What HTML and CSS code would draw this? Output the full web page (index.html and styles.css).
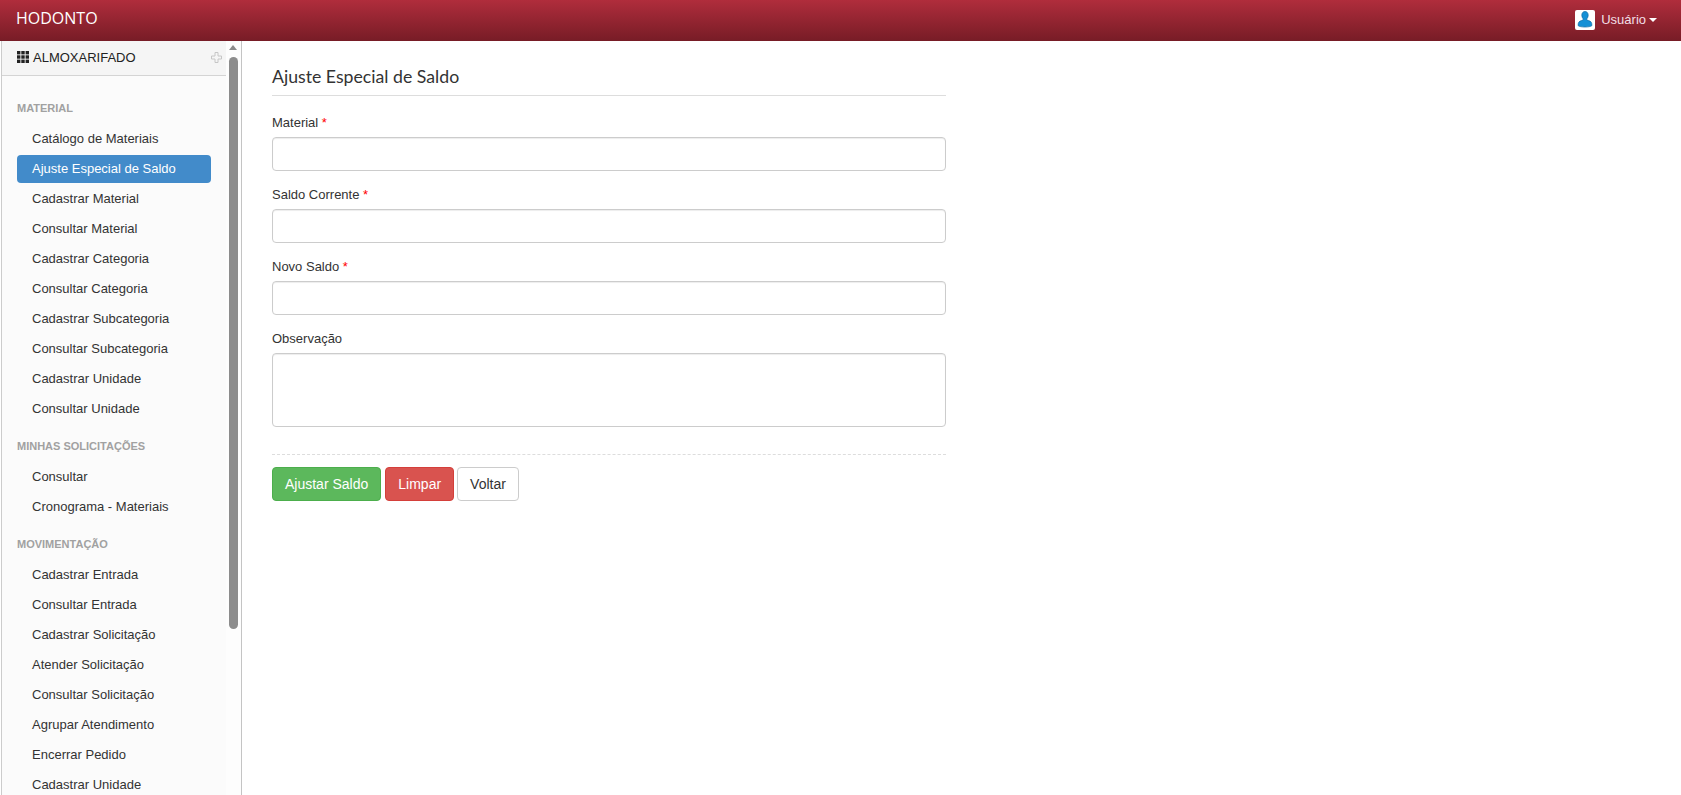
FILE: index.html
```html
<!DOCTYPE html>
<html lang="pt-BR">
<head>
<meta charset="utf-8">
<title>HODONTO</title>
<link rel="stylesheet" href="styles.css">
</head>
<body>
<header class="topbar">
  <span class="brand">HODONTO</span>
  <div class="user">
    <span class="avatar">
      <svg width="20" height="20" viewBox="0 0 20 20"><rect width="20" height="20" rx="2" fill="#fff"/><path d="M10 1.500c1.900 0 3.200 1.500 3.200 3.700 0 1.500-.6 2.800-1.400 3.600v1c0 .5 3.200.9 4.200 2.100.7.8.9 2.200.9 3.700-1 1-4 1.400-6.900 1.400s-5.900-.4-6.900-1.400c0-1.500.2-2.900.9-3.700 1-1.200 4.200-1.600 4.200-2.100v-1c-.8-.8-1.400-2.100-1.400-3.600 0-2.200 1.300-3.700 3.200-3.700z" fill="#1490d6" stroke="#0b6aa5" stroke-width=".7"/></svg>
    </span>
    <span class="user-name">Usuário</span>
    <span class="caret"></span>
  </div>
</header>
<div class="layout">
  <aside class="sidebar">
    <div class="side-main">
      <div class="side-head">
        <svg class="grid-icon" width="12" height="12" viewBox="0 0 12 12" fill="#222"><rect width="3.400" height="3.400"/><rect x="4.300" width="3.400" height="3.400"/><rect x="8.600" width="3.400" height="3.400"/><rect y="4.300" width="3.400" height="3.400"/><rect x="4.300" y="4.300" width="3.400" height="3.400"/><rect x="8.600" y="4.300" width="3.400" height="3.400"/><rect y="8.600" width="3.400" height="3.400"/><rect x="4.300" y="8.600" width="3.400" height="3.400"/><rect x="8.600" y="8.600" width="3.400" height="3.400"/></svg>
        <span class="side-title">ALMOXARIFADO</span>
        <svg class="plus-icon" width="11" height="11" viewBox="0 0 11 11"><path d="M4 .5h3v3.500h3.500v3h-3.500v3.500h-3v-3.500h-3.500v-3h3.500z" fill="#f5f5f5" stroke="#c6c6c6"/></svg>
      </div>
      <nav class="side-nav">
        <h5 class="nav-heading">MATERIAL</h5>
        <ul class="nav-list">
          <li><a class="nav-item">Catálogo de Materiais</a></li>
          <li><a class="nav-item active">Ajuste Especial de Saldo</a></li>
          <li><a class="nav-item">Cadastrar Material</a></li>
          <li><a class="nav-item">Consultar Material</a></li>
          <li><a class="nav-item">Cadastrar Categoria</a></li>
          <li><a class="nav-item">Consultar Categoria</a></li>
          <li><a class="nav-item">Cadastrar Subcategoria</a></li>
          <li><a class="nav-item">Consultar Subcategoria</a></li>
          <li><a class="nav-item">Cadastrar Unidade</a></li>
          <li><a class="nav-item">Consultar Unidade</a></li>
        </ul>
        <h5 class="nav-heading">MINHAS SOLICITAÇÕES</h5>
        <ul class="nav-list">
          <li><a class="nav-item">Consultar</a></li>
          <li><a class="nav-item">Cronograma - Materiais</a></li>
        </ul>
        <h5 class="nav-heading">MOVIMENTAÇÃO</h5>
        <ul class="nav-list">
          <li><a class="nav-item">Cadastrar Entrada</a></li>
          <li><a class="nav-item">Consultar Entrada</a></li>
          <li><a class="nav-item">Cadastrar Solicitação</a></li>
          <li><a class="nav-item">Atender Solicitação</a></li>
          <li><a class="nav-item">Consultar Solicitação</a></li>
          <li><a class="nav-item">Agrupar Atendimento</a></li>
          <li><a class="nav-item">Encerrar Pedido</a></li>
          <li><a class="nav-item">Cadastrar Unidade</a></li>
        </ul>
      </nav>
    </div>
    <div class="scrollbar">
      <span class="scroll-arrow"></span>
      <span class="scroll-thumb"></span>
    </div>
  </aside>
  <main class="content">
    <form class="form">
      <h3 class="form-title">Ajuste Especial de Saldo</h3>
      <div class="field">
        <label class="field-label">Material <span class="req">*</span></label>
        <input class="control" type="text">
      </div>
      <div class="field">
        <label class="field-label">Saldo Corrente <span class="req">*</span></label>
        <input class="control" type="text">
      </div>
      <div class="field">
        <label class="field-label">Novo Saldo <span class="req">*</span></label>
        <input class="control" type="text">
      </div>
      <div class="field">
        <label class="field-label">Observação</label>
        <textarea class="control area"></textarea>
      </div>
      <div class="actions">
        <button class="btn success" type="button">Ajustar Saldo</button>
        <button class="btn danger" type="button">Limpar</button>
        <button class="btn plain" type="button">Voltar</button>
      </div>
    </form>
  </main>
</div>
</body>
</html>
```
FILE: styles.css
```css
* { box-sizing: border-box; }
html, body { height: 100%; }
body {
  margin: 0;
  height: 795px;
  overflow: hidden;
  display: flex;
  flex-direction: column;
  background: #fff;
  color: #333;
  font-family: "Liberation Sans", Arial, sans-serif;
  font-size: 13px;
}
.topbar {
  flex: 0 0 41px;
  display: flex;
  align-items: center;
  justify-content: space-between;
  padding: 0 24px 6px 16px;
  background: linear-gradient(to bottom, #b02d3c 0%, #771c26 100%);
}
.brand { color: #fff; font-family: "Open Sans", sans-serif; font-size: 16px; }
.user { display: flex; align-items: center; margin-top: 5px; }
.avatar { display: flex; width: 20px; height: 20px; margin-right: 6px; }
.user-name { color: #f2dfe6; font-size: 13px; padding-bottom: 2px; }
.caret {
  width: 0; height: 0; margin-left: 3px;
  border-top: 4px solid #fff;
  border-left: 4px solid transparent;
  border-right: 4px solid transparent;
}
.layout { flex: 1; display: flex; min-height: 0; }
.sidebar {
  flex: 0 0 241px;
  margin-left: 1px;
  display: flex;
  overflow: hidden;
  background: #fbfbfb;
  border-left: 1px solid #ccc;
  border-right: 1px solid #c4c4c4;
}
.side-main { flex: 1; min-width: 0; }
.side-head {
  height: 35px;
  display: flex;
  align-items: center;
  padding: 0 4px 2px 15px;
  background: #f5f5f5;
  border-bottom: 1px solid #d4d4d4;
  color: #222;
  font-size: 13px;
}
.grid-icon { margin-right: 4px; }
.side-title { flex: 1; }
.side-nav { padding: 11px 15px 0; }
.nav-heading {
  margin: 0;
  padding: 15px 0 10px;
  color: #a1a1a1;
  font-size: 11px;
  font-weight: 700;
  line-height: 13px;
}
.nav-list { list-style: none; margin: 0; padding: 0; }
.nav-list li { margin-bottom: 2px; }
.nav-item {
  display: block;
  height: 28px;
  padding: 0 15px;
  border-radius: 4px;
  color: #333;
  font-size: 13px;
  line-height: 28px;
}
.nav-item.active { background: #428bca; color: #fff; }
.scrollbar {
  flex: 0 0 15px;
  display: flex;
  flex-direction: column;
  padding-left: 3px;
  background: #fdfdfd;
}
.scroll-arrow {
  width: 0; height: 0; margin-top: 4px;
  border-bottom: 5px solid #8a8a8a;
  border-left: 4.5px solid transparent;
  border-right: 4.5px solid transparent;
}
.scroll-thumb {
  width: 9px; height: 572px; margin-top: 7px;
  border-radius: 4.5px;
  background: #8c8c8c;
}
.content { flex: 1; padding: 0 0 0 30px; }
.form { width: 674px; }
.form-title {
  margin: 0 0 18px;
  padding: 24px 0 6px;
  height: 55px;
  border-bottom: 1px solid #ddd;
  color: #333;
  font-family: Lato, sans-serif;
  font-size: 17.7px;
  font-weight: 400;
  line-height: 24px;
}
.field { margin-bottom: 15px; }
.field-label { display: block; height: 21px; margin-bottom: 2px; color: #333; font-size: 13px; line-height: 18px; }
.req { color: #f00; }
.control {
  display: block;
  width: 100%;
  height: 34px;
  padding: 6px 12px;
  border: 1px solid #ccc;
  border-radius: 4px;
  background: #fff;
  box-shadow: inset 0 1px 1px rgba(0,0,0,.075);
  font-family: inherit;
  font-size: 14px;
}
.area { height: 74px; resize: none; }
.actions {
  display: flex;
  margin-top: 27px;
  padding-top: 12px;
  border-top: 1px dashed #ddd;
}
.btn {
  height: 34px;
  padding: 0 12px;
  border: 1px solid transparent;
  border-radius: 4px;
  font-family: inherit;
  font-size: 14px;
  line-height: 20px;
}
.success { background: #5cb85c; border-color: #4cae4c; color: #fff; margin-right: 4px; }
.danger { background: #d9534f; border-color: #d43f3a; color: #fff; margin-right: 3px; }
.plain { background: #fff; border-color: #ccc; color: #333; }
```
